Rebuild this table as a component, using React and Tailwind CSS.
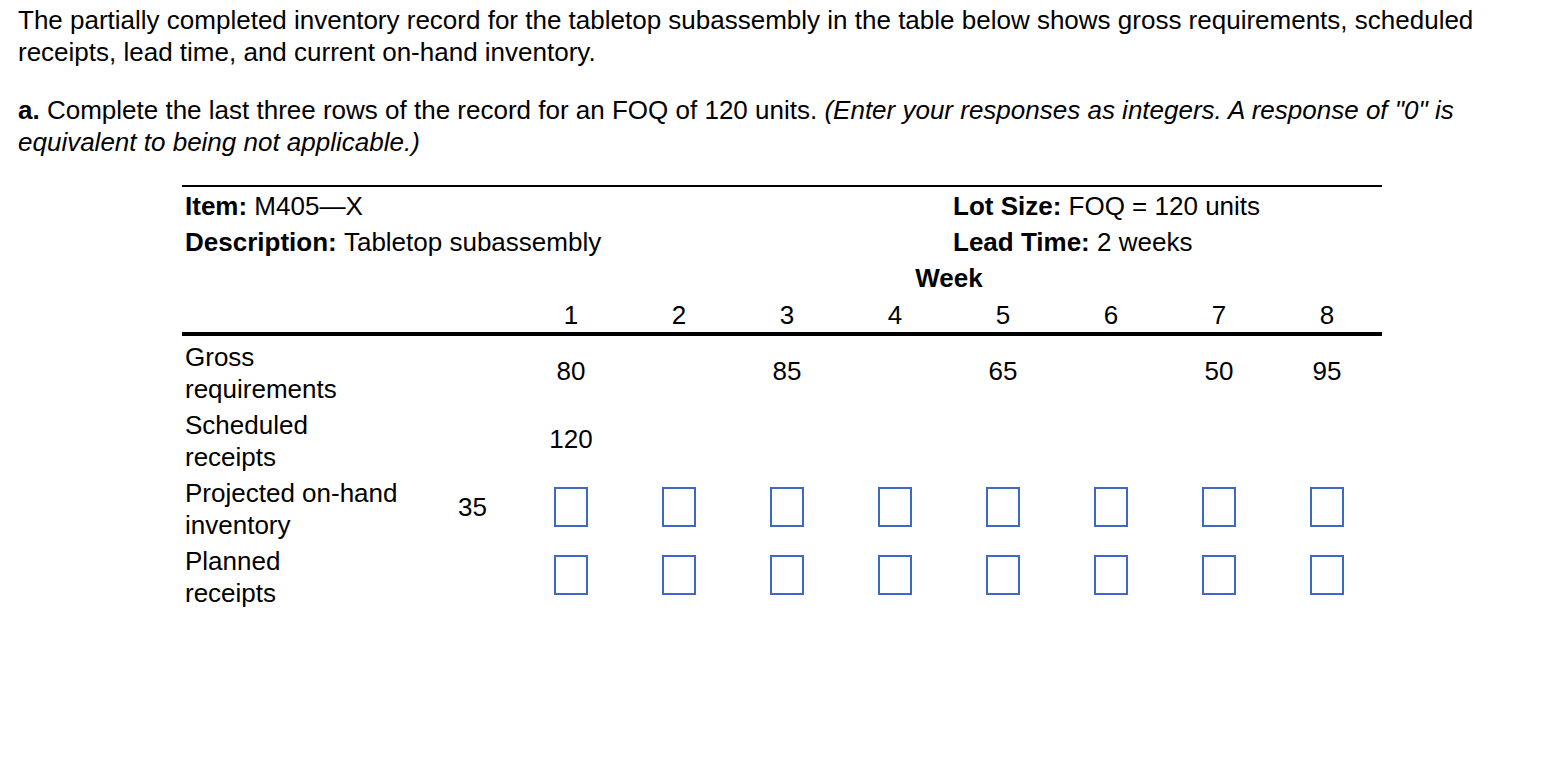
import React from "react";

const weeks = [1, 2, 3, 4, 5, 6, 7, 8];

const rows = [
  { label: ["Gross", "requirements"], initial: "", values: ["80", "", "85", "", "65", "", "50", "95"] },
  { label: ["Scheduled", "receipts"], initial: "", values: ["120", "", "", "", "", "", "", ""] },
  { label: ["Projected on-hand", "inventory"], initial: "35", input: true },
  { label: ["Planned", "receipts"], initial: "", input: true },
];

const InputBox = () => (
  <div className="w-[34px] h-[40px] border-2 border-[#3f67c6] bg-white" />
);

export default function App() {
  return (
    <div
      className="min-h-screen bg-white text-black text-[26px] leading-[32px]"
      style={{ fontFamily: '"Liberation Sans", Arial, Helvetica, sans-serif' }}
    >
      <div className="pl-[18px] pt-[4px] pr-[70px]">
        <p>
          The partially completed inventory record for the tabletop subassembly in the table below shows gross requirements, scheduled receipts, lead time, and current on-hand inventory.
        </p>
        <p className="mt-[26px] pr-[20px]">
          <span className="font-bold">a.</span> Complete the last three rows of the record for an FOQ of 120 units.{" "}
          <i>(Enter your responses as integers. A response of "0" is equivalent to being not applicable.)</i>
        </p>
      </div>

      {/* Inventory record */}
      <div className="ml-[182px] mt-[27px] w-[1200px]">
        <div className="border-t-2 border-black pt-[1px]">
          <div className="grid grid-cols-[248px_87px_repeat(8,108px)]">
            <div className="col-span-6 h-[36px] flex items-center pl-[3px]">
              <span className="font-bold">Item:&nbsp;</span>M405—X
            </div>
            <div className="col-span-4 h-[36px] flex items-center pl-[4px]">
              <span className="font-bold">Lot Size:&nbsp;</span>FOQ = 120 units
            </div>
            <div className="col-span-6 h-[36px] flex items-center pl-[3px]">
              <span className="font-bold">Description:&nbsp;</span>Tabletop subassembly
            </div>
            <div className="col-span-4 h-[36px] flex items-center pl-[4px]">
              <span className="font-bold">Lead Time:&nbsp;</span>2 weeks
            </div>
            <div className="col-span-2 h-[36px]" />
            <div className="col-span-8 h-[36px] flex items-center justify-center font-bold">Week</div>
            <div className="col-span-2 h-[36px]" />
            {weeks.map((w) => (
              <div key={w} className="h-[36px] flex items-center justify-center pt-[1px]">
                {w}
              </div>
            ))}
          </div>
        </div>

        <div className="border-t-4 border-black pt-[1px]">
          {rows.map((row, i) => (
            <div key={i} className="grid grid-cols-[248px_87px_repeat(8,108px)] h-[68px] items-center">
              <div className="pl-[3px] pt-[3px]">
                <div>{row.label[0]}</div>
                <div>{row.label[1]}</div>
              </div>
              <div className="text-center pr-[2px]">{row.initial}</div>
              {weeks.map((w, j) => (
                <div key={w} className="flex justify-center">
                  {row.input ? <InputBox /> : row.values[j]}
                </div>
              ))}
            </div>
          ))}
        </div>
      </div>
    </div>
  );
}
